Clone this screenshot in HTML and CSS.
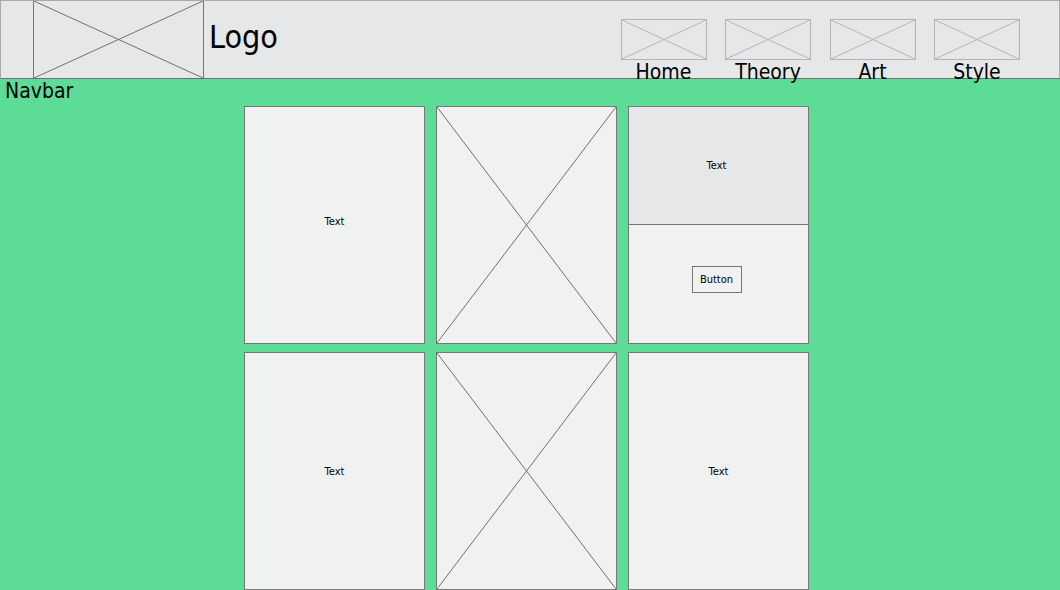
FILE: index.html
```html
<!DOCTYPE html>
<html lang="en">
<head>
<meta charset="utf-8">
<title>Wireframe</title>
<link rel="stylesheet" href="styles.css">
</head>
<body>
<header class="header">
  <div class="logo-img">
    <svg class="x" viewBox="0 0 100 100" preserveAspectRatio="none"><line x1="0" y1="0" x2="100" y2="100"/><line x1="100" y1="0" x2="0" y2="100"/></svg>
  </div>
  <div class="logo-text">Logo</div>
  <nav class="nav">
    <a class="nav-item"><span class="nav-img"><svg class="x light" viewBox="0 0 100 100" preserveAspectRatio="none"><line x1="0" y1="0" x2="100" y2="100"/><line x1="100" y1="0" x2="0" y2="100"/></svg></span><span class="nav-label">Home</span></a>
    <a class="nav-item"><span class="nav-img"><svg class="x light" viewBox="0 0 100 100" preserveAspectRatio="none"><line x1="0" y1="0" x2="100" y2="100"/><line x1="100" y1="0" x2="0" y2="100"/></svg></span><span class="nav-label">Theory</span></a>
    <a class="nav-item"><span class="nav-img"><svg class="x light" viewBox="0 0 100 100" preserveAspectRatio="none"><line x1="0" y1="0" x2="100" y2="100"/><line x1="100" y1="0" x2="0" y2="100"/></svg></span><span class="nav-label">Art</span></a>
    <a class="nav-item"><span class="nav-img"><svg class="x light" viewBox="0 0 100 100" preserveAspectRatio="none"><line x1="0" y1="0" x2="100" y2="100"/><line x1="100" y1="0" x2="0" y2="100"/></svg></span><span class="nav-label">Style</span></a>
  </nav>
</header>
<div class="navbar-label">Navbar</div>
<main class="grid">
  <div class="card center card-lift"><span class="small">Text</span></div>
  <div class="card"><svg class="x" viewBox="0 0 100 100" preserveAspectRatio="none"><line x1="0" y1="0" x2="100" y2="100"/><line x1="100" y1="0" x2="0" y2="100"/></svg></div>
  <div class="card split">
    <div class="split-top center"><span class="small">Text</span></div>
    <div class="split-bottom center"><button class="btn">Button</button></div>
  </div>
  <div class="card center"><span class="small">Text</span></div>
  <div class="card"><svg class="x" viewBox="0 0 100 100" preserveAspectRatio="none"><line x1="0" y1="0" x2="100" y2="100"/><line x1="100" y1="0" x2="0" y2="100"/></svg></div>
  <div class="card center"><span class="small">Text</span></div>
</main>
</body>
</html>
```
FILE: styles.css
```css
* { box-sizing: border-box; }
html, body { margin: 0; padding: 0; }
body {
  background: #5cdc96;
  font-family: "DejaVu Sans Condensed", "DejaVu Sans", sans-serif;
  color: #000;
  width: 1060px;
  height: 590px;
  overflow: hidden;
}
.header {
  height: 79px;
  background: #e6e7e9;
  border: 1px solid #a9a9a9;
  border-bottom-color: #6f6f6f;
  display: flex;
  align-items: stretch;
  padding-left: 32px;
  padding-right: 39px;
}
.logo-img {
  width: 171px;
  border-left: 1px solid #777;
  border-right: 1px solid #777;
  position: relative;
}
.x {
  display: block;
  width: 100%;
  height: 100%;
}
.x line {
  stroke: #707070;
  stroke-width: 1;
  vector-effect: non-scaling-stroke;
}
.x.light line { stroke: #b4b4b4; }
.logo-text {
  font-size: 32px;
  line-height: 77px;
  margin-left: 5px;
  margin-top: -2px;
}
.nav {
  margin-left: auto;
  display: flex;
  gap: 18.5px;
  padding-top: 18px;
}
.nav-item {
  display: flex;
  flex-direction: column;
  align-items: center;
  width: 86px;
}
.nav-img {
  display: block;
  width: 86px;
  height: 41px;
  border: 1px solid #b4b4b4;
}
.nav-label {
  font-size: 21px;
  line-height: 24px;
  white-space: nowrap;
}
.navbar-label {
  font-size: 21px;
  line-height: 24px;
  padding-left: 5px;
}
.grid {
  display: grid;
  grid-template-columns: repeat(3, 181px);
  grid-auto-rows: 238px;
  column-gap: 11px;
  row-gap: 8px;
  margin-left: 244px;
  margin-top: 3px;
}
.card {
  background: #f0f2f1;
  border: 1px solid #777;
  overflow: hidden;
}
.card-lift { padding-bottom: 8px; }
.center {
  display: flex;
  align-items: center;
  justify-content: center;
}
.small { font-size: 11px; }
.split {
  display: flex;
  flex-direction: column;
}
.split-top {
  height: 118px;
  background: #e6e7e9;
  border-bottom: 1px solid #777;
  padding-right: 4px;
}
.split-bottom {
  flex: 1;
  padding-bottom: 10px;
  padding-right: 4px;
}
.btn {
  font-family: inherit;
  font-size: 11px;
  width: 50px;
  height: 27px;
  padding: 0;
  background: #f0f2f1;
  border: 1px solid #777;
  color: #000;
}
```
